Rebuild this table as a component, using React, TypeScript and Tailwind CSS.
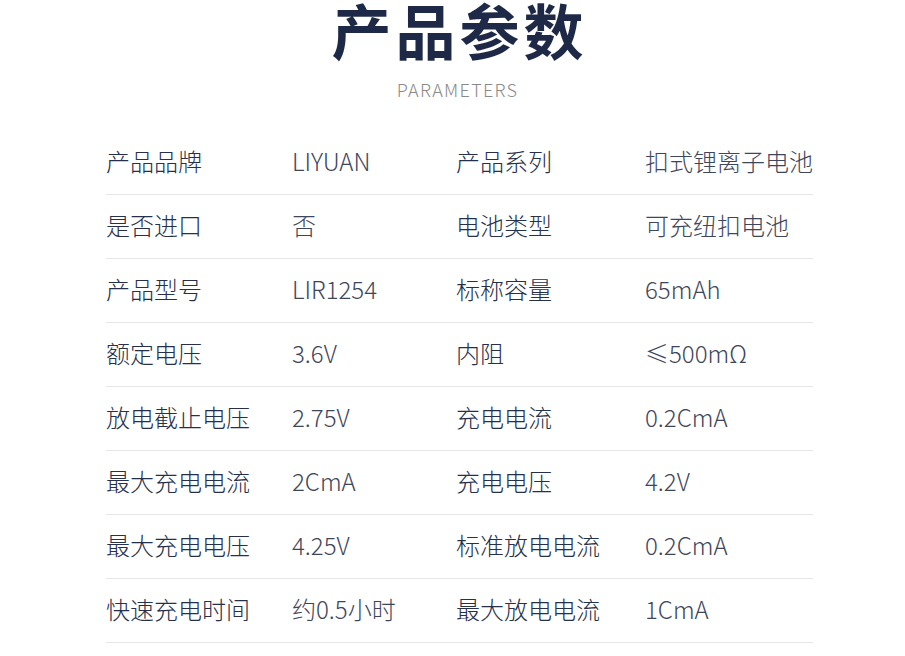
const rows: [string, string, string, string][] = [
  ['产品品牌', 'LIYUAN', '产品系列', '扣式锂离子电池'],
  ['是否进口', '否', '电池类型', '可充纽扣电池'],
  ['产品型号', 'LIR1254', '标称容量', '65mAh'],
  ['额定电压', '3.6V', '内阻', '≤500mΩ'],
  ['放电截止电压', '2.75V', '充电电流', '0.2CmA'],
  ['最大充电电流', '2CmA', '充电电压', '4.2V'],
  ['最大充电电压', '4.25V', '标准放电电流', '0.2CmA'],
  ['快速充电时间', '约0.5小时', '最大放电电流', '1CmA'],
]

export default function App() {
  return (
    <div
      className="w-[905px] h-[656px] bg-white overflow-hidden"
      style={{ fontFamily: '"Noto Sans CJK SC", "Noto Sans", sans-serif' }}
    >
      <h1 className="text-center text-[60px] leading-[58px] font-bold text-[#1d2946] tracking-[4px] pl-[14px]">
        产品参数
      </h1>
      <p className="text-center text-[18px] leading-[20px] tracking-[1.3px] text-[#8a8a8a] mt-[21px] font-light pl-[10px]">
        PARAMETERS
      </p>
      <div className="mx-[106px] w-[707px] mt-[32px]">
        {rows.map((r, i) => (
          <div
            key={i}
            className="h-[64px] flex items-center pb-[4px] border-b border-[#e4e6ea] text-[24px] font-light"
          >
            <span className="w-[186px] text-[#27304a]">{r[0]}</span>
            <span className="w-[164px] text-[#3e465c]">{r[1]}</span>
            <span className="w-[189px] text-[#27304a]">{r[2]}</span>
            <span className="text-[#3e465c]">{r[3]}</span>
          </div>
        ))}
      </div>
    </div>
  )
}
